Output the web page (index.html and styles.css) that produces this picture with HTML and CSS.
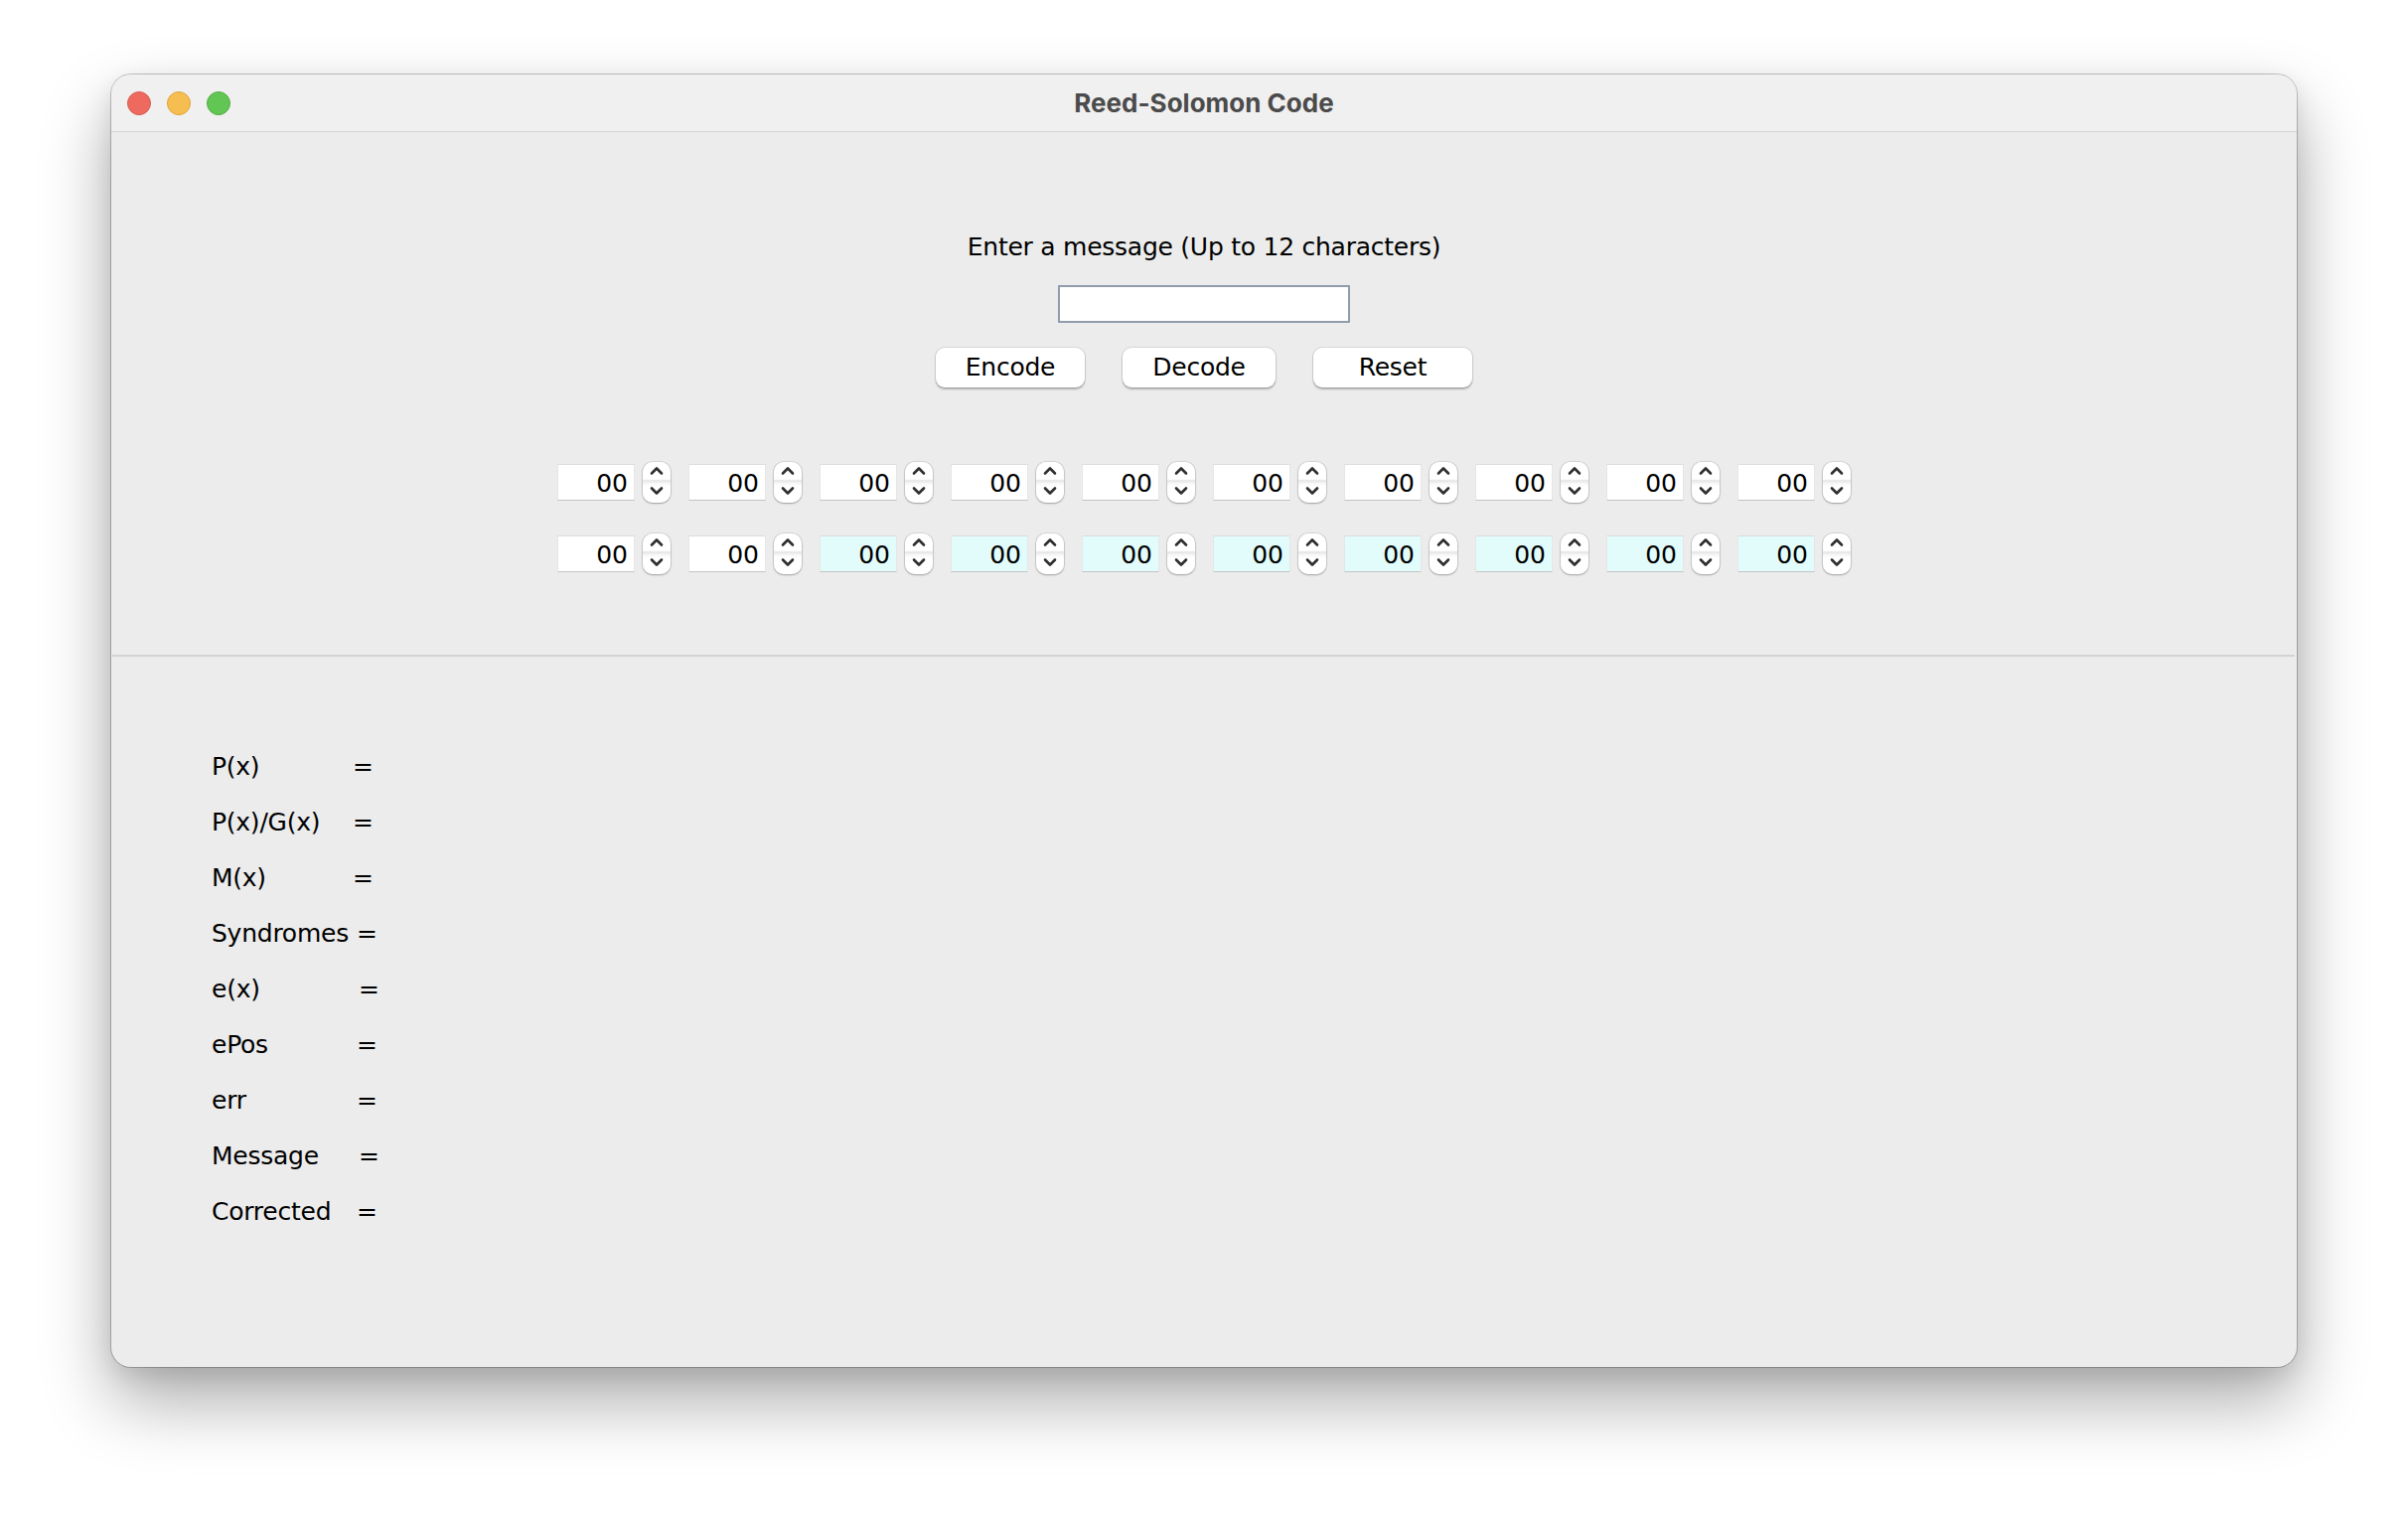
FILE: index.html
```html
<!DOCTYPE html>
<html lang="en">
<head>
<meta charset="utf-8">
<title>Reed-Solomon Code</title>
<link rel="stylesheet" href="styles.css">
</head>
<body>
<div class="stage">
  <div class="window">
    <div class="titlebar">
      <div class="lights">
        <span class="light red"></span>
        <span class="light yellow"></span>
        <span class="light green"></span>
      </div>
      <div class="title">Reed-Solomon Code</div>
      <div class="spacer"></div>
    </div>
    <div class="top">
      <div class="prompt">Enter a message (Up to 12 characters)</div>
      <div class="msg-input"></div>
      <div class="buttons">
        <div class="btn btn-encode">Encode</div>
        <div class="btn btn-decode">Decode</div>
        <div class="btn btn-reset">Reset</div>
      </div>
      <div class="spin-row">
        <div class="spin"><div class="field">00</div><div class="arrows"><svg viewBox="0 0 28 41" width="28" height="41"><path class="chev" d="M9 11.5 L14 6.5 L19 11.5"/><path class="chev" d="M9 26.5 L14 31.5 L19 26.5"/></svg></div></div>
        <div class="spin"><div class="field">00</div><div class="arrows"><svg viewBox="0 0 28 41" width="28" height="41"><path class="chev" d="M9 11.5 L14 6.5 L19 11.5"/><path class="chev" d="M9 26.5 L14 31.5 L19 26.5"/></svg></div></div>
        <div class="spin"><div class="field">00</div><div class="arrows"><svg viewBox="0 0 28 41" width="28" height="41"><path class="chev" d="M9 11.5 L14 6.5 L19 11.5"/><path class="chev" d="M9 26.5 L14 31.5 L19 26.5"/></svg></div></div>
        <div class="spin"><div class="field">00</div><div class="arrows"><svg viewBox="0 0 28 41" width="28" height="41"><path class="chev" d="M9 11.5 L14 6.5 L19 11.5"/><path class="chev" d="M9 26.5 L14 31.5 L19 26.5"/></svg></div></div>
        <div class="spin"><div class="field">00</div><div class="arrows"><svg viewBox="0 0 28 41" width="28" height="41"><path class="chev" d="M9 11.5 L14 6.5 L19 11.5"/><path class="chev" d="M9 26.5 L14 31.5 L19 26.5"/></svg></div></div>
        <div class="spin"><div class="field">00</div><div class="arrows"><svg viewBox="0 0 28 41" width="28" height="41"><path class="chev" d="M9 11.5 L14 6.5 L19 11.5"/><path class="chev" d="M9 26.5 L14 31.5 L19 26.5"/></svg></div></div>
        <div class="spin"><div class="field">00</div><div class="arrows"><svg viewBox="0 0 28 41" width="28" height="41"><path class="chev" d="M9 11.5 L14 6.5 L19 11.5"/><path class="chev" d="M9 26.5 L14 31.5 L19 26.5"/></svg></div></div>
        <div class="spin"><div class="field">00</div><div class="arrows"><svg viewBox="0 0 28 41" width="28" height="41"><path class="chev" d="M9 11.5 L14 6.5 L19 11.5"/><path class="chev" d="M9 26.5 L14 31.5 L19 26.5"/></svg></div></div>
        <div class="spin"><div class="field">00</div><div class="arrows"><svg viewBox="0 0 28 41" width="28" height="41"><path class="chev" d="M9 11.5 L14 6.5 L19 11.5"/><path class="chev" d="M9 26.5 L14 31.5 L19 26.5"/></svg></div></div>
        <div class="spin"><div class="field">00</div><div class="arrows"><svg viewBox="0 0 28 41" width="28" height="41"><path class="chev" d="M9 11.5 L14 6.5 L19 11.5"/><path class="chev" d="M9 26.5 L14 31.5 L19 26.5"/></svg></div></div>
      </div>
      <div class="spin-row spin-row-2">
        <div class="spin"><div class="field">00</div><div class="arrows"><svg viewBox="0 0 28 41" width="28" height="41"><path class="chev" d="M9 11.5 L14 6.5 L19 11.5"/><path class="chev" d="M9 26.5 L14 31.5 L19 26.5"/></svg></div></div>
        <div class="spin"><div class="field">00</div><div class="arrows"><svg viewBox="0 0 28 41" width="28" height="41"><path class="chev" d="M9 11.5 L14 6.5 L19 11.5"/><path class="chev" d="M9 26.5 L14 31.5 L19 26.5"/></svg></div></div>
        <div class="spin"><div class="field parity">00</div><div class="arrows"><svg viewBox="0 0 28 41" width="28" height="41"><path class="chev" d="M9 11.5 L14 6.5 L19 11.5"/><path class="chev" d="M9 26.5 L14 31.5 L19 26.5"/></svg></div></div>
        <div class="spin"><div class="field parity">00</div><div class="arrows"><svg viewBox="0 0 28 41" width="28" height="41"><path class="chev" d="M9 11.5 L14 6.5 L19 11.5"/><path class="chev" d="M9 26.5 L14 31.5 L19 26.5"/></svg></div></div>
        <div class="spin"><div class="field parity">00</div><div class="arrows"><svg viewBox="0 0 28 41" width="28" height="41"><path class="chev" d="M9 11.5 L14 6.5 L19 11.5"/><path class="chev" d="M9 26.5 L14 31.5 L19 26.5"/></svg></div></div>
        <div class="spin"><div class="field parity">00</div><div class="arrows"><svg viewBox="0 0 28 41" width="28" height="41"><path class="chev" d="M9 11.5 L14 6.5 L19 11.5"/><path class="chev" d="M9 26.5 L14 31.5 L19 26.5"/></svg></div></div>
        <div class="spin"><div class="field parity">00</div><div class="arrows"><svg viewBox="0 0 28 41" width="28" height="41"><path class="chev" d="M9 11.5 L14 6.5 L19 11.5"/><path class="chev" d="M9 26.5 L14 31.5 L19 26.5"/></svg></div></div>
        <div class="spin"><div class="field parity">00</div><div class="arrows"><svg viewBox="0 0 28 41" width="28" height="41"><path class="chev" d="M9 11.5 L14 6.5 L19 11.5"/><path class="chev" d="M9 26.5 L14 31.5 L19 26.5"/></svg></div></div>
        <div class="spin"><div class="field parity">00</div><div class="arrows"><svg viewBox="0 0 28 41" width="28" height="41"><path class="chev" d="M9 11.5 L14 6.5 L19 11.5"/><path class="chev" d="M9 26.5 L14 31.5 L19 26.5"/></svg></div></div>
        <div class="spin"><div class="field parity">00</div><div class="arrows"><svg viewBox="0 0 28 41" width="28" height="41"><path class="chev" d="M9 11.5 L14 6.5 L19 11.5"/><path class="chev" d="M9 26.5 L14 31.5 L19 26.5"/></svg></div></div>
      </div>
    </div>
    <div class="divider"></div>
    <div class="bottom">
      <div class="row"><span class="lbl">P(x)</span><span class="eq">=</span></div>
      <div class="row"><span class="lbl">P(x)/G(x)</span><span class="eq">=</span></div>
      <div class="row"><span class="lbl">M(x)</span><span class="eq">=</span></div>
      <div class="row"><span class="lbl">Syndromes</span><span class="eq eq-4">=</span></div>
      <div class="row"><span class="lbl">e(x)</span><span class="eq eq-6">=</span></div>
      <div class="row"><span class="lbl">ePos</span><span class="eq eq-4">=</span></div>
      <div class="row"><span class="lbl">err</span><span class="eq eq-4">=</span></div>
      <div class="row"><span class="lbl">Message</span><span class="eq eq-6">=</span></div>
      <div class="row"><span class="lbl">Corrected</span><span class="eq eq-4">=</span></div>
    </div>
  </div>
</div>
</body>
</html>
```
FILE: styles.css
```css
html, body {
  margin: 0;
  padding: 0;
  background: #ffffff;
}
body {
  width: 2424px;
  height: 1524px;
  overflow: hidden;
  font-family: "DejaVu Sans", "Liberation Sans", sans-serif;
  color: #000;
}
.stage {
  padding: 75px 0 0 112px;
}
.window {
  width: 2200px;
  height: 1301px;
  box-sizing: border-box;
  background: #ececec;
  border-radius: 20px;
  overflow: hidden;
  display: flex;
  flex-direction: column;
  box-shadow: 0 0 0 1px rgba(0,0,0,0.22), 0 34px 70px rgba(0,0,0,0.33), 0 8px 24px rgba(0,0,0,0.10);
}
.titlebar {
  height: 57px;
  flex: 0 0 57px;
  background: #f0f0f0;
  border-bottom: 1px solid #d2d2d2;
  display: grid;
  grid-template-columns: 1fr auto 1fr;
  align-items: center;
}
.lights {
  display: flex;
  gap: 16px;
  padding-left: 16px;
  padding-top: 1px;
}
.light {
  width: 24px;
  height: 24px;
  border-radius: 50%;
  box-sizing: border-box;
}
.red { background: #ee6a5f; border: 1px solid #d65a4f; }
.yellow { background: #f6be50; border: 1px solid #dda33a; }
.green { background: #62c655; border: 1px solid #52ac44; }
.title {
  font-family: "Inter", "Roboto", sans-serif;
  font-weight: 700;
  font-size: 26px;
  color: #4b4b4b;
}
.top {
  height: 526px;
  flex: 0 0 526px;
  box-sizing: border-box;
  padding-top: 101px;
  display: flex;
  flex-direction: column;
  align-items: center;
}
.prompt {
  font-size: 25px;
  line-height: 30px;
  letter-spacing: -0.25px;
}
.msg-input {
  margin-top: 23px;
  width: 294px;
  height: 38px;
  box-sizing: border-box;
  background: #fff;
  border: 2px solid #8e9cab;
  border-radius: 1px;
}
.buttons {
  margin-top: 25px;
  display: flex;
  gap: 38px;
}
.btn {
  height: 40px;
  box-sizing: border-box;
  background: #fff;
  border-radius: 9px;
  font-size: 25px;
  line-height: 40px;
  letter-spacing: -0.25px;
  text-align: center;
  box-shadow: 0 0 0 1px rgba(0,0,0,0.08), 0 1.5px 2px rgba(0,0,0,0.25);
}
.btn-encode { width: 150px; }
.btn-decode { width: 154px; }
.btn-reset { width: 160px; }
.spin-row {
  margin-top: 75px;
  display: flex;
  gap: 18px;
}
.spin-row-2 {
  margin-top: 31px;
}
.spin {
  display: flex;
  align-items: center;
  gap: 8px;
  height: 41px;
}
.field {
  width: 78px;
  height: 37px;
  box-sizing: border-box;
  background: #fff;
  border-top: 1px solid #dcdcdc;
  border-bottom: 1px solid #c4c4c4;
  border-left: 1px solid #e6e6e6;
  border-right: 1px solid #e6e6e6;
  padding: 2px 6px 0 0;
  font-size: 25px;
  line-height: 33px;
  text-align: right;
}
.field.parity {
  background: #e2fcfc;
}
.arrows {
  width: 28px;
  height: 41px;
  border-radius: 10px;
  background: linear-gradient(#ffffff 0%, #ffffff 42%, #e4e4e4 46%, #f6f6f6 52%, #ffffff 60%, #ffffff 100%);
  box-shadow: 0 0 0 0.8px rgba(0,0,0,0.12), 0 1px 2px rgba(0,0,0,0.25);
}
.arrows svg {
  display: block;
}
.chev {
  fill: none;
  stroke: #2e2e2e;
  stroke-width: 2.6;
  stroke-linecap: round;
  stroke-linejoin: round;
}
.divider {
  height: 2px;
  flex: 0 0 2px;
  background: #d3d3d3;
  margin: 0 2px 0 1px;
}
.bottom {
  padding: 83px 0 0 101px;
}
.row {
  display: flex;
  height: 56px;
  line-height: 56px;
  font-size: 25px;
  letter-spacing: -0.25px;
}
.lbl {
  width: 142px;
  flex: 0 0 142px;
  white-space: nowrap;
}
.eq-4 { margin-left: 4px; }
.eq-6 { margin-left: 6px; }
```
